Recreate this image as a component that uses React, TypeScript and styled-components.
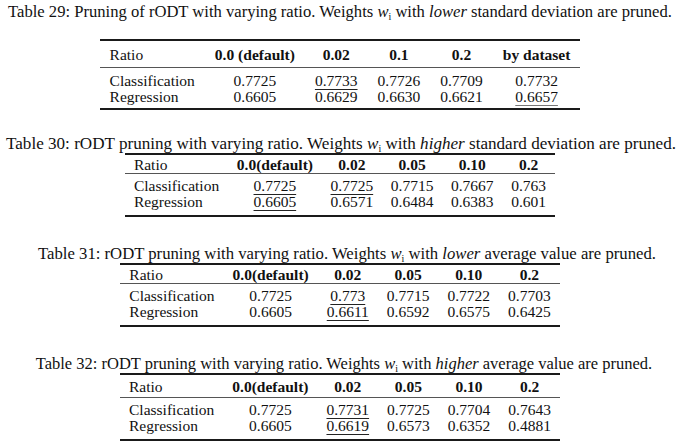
import styled, { createGlobalStyle } from 'styled-components'

const GlobalStyle = createGlobalStyle`
  html, body {
    margin: 0;
    padding: 0;
    background: #fff;
  }
  body {
    font-family: "Liberation Serif", "Times New Roman", serif;
    color: #111;
  }
  table, th, td {
    font-family: "Liberation Serif", "Times New Roman", serif;
  }
`

type Cell = { v: string; u?: boolean; faint?: boolean }

type TableData = {
  caption: React.ReactNode
  capSize: number
  capShift: number
  head: string[]
  rows: { label: string; cells: Cell[] }[]
  capGap: number
  headPad: number
  topSpace: number
  padX: number
}

const Weight = () => (
  <MathVar>
    <i>w</i>
    <sub>i</sub>
  </MathVar>
)

const tables: TableData[] = [
  {
    caption: (
      <>
        Table 29: Pruning of rODT with varying ratio. Weights <Weight /> with <i>lower</i> standard deviation are
        pruned.
      </>
    ),
    capSize: 16.6,
    capShift: 0,
    head: ['0.0 (default)', '0.02', '0.1', '0.2', 'by dataset'],
    rows: [
      { label: 'Classification', cells: [{ v: '0.7725' }, { v: '0.7733', u: true }, { v: '0.7726' }, { v: '0.7709' }, { v: '0.7732' }] },
      { label: 'Regression', cells: [{ v: '0.6605' }, { v: '0.6629' }, { v: '0.6630' }, { v: '0.6621' }, { v: '0.6657', u: true, faint: true }] },
    ],
    capGap: 18,
    headPad: 4.5,
    topSpace: 3,
    padX: 10,
  },
  {
    caption: (
      <>
        Table 30: rODT pruning with varying ratio. Weights <Weight /> with <i>higher</i> standard deviation are pruned.
      </>
    ),
    capSize: 17.1,
    capShift: 1,
    head: ['0.0(default)', '0.02', '0.05', '0.10', '0.2'],
    rows: [
      { label: 'Classification', cells: [{ v: '0.7725', u: true }, { v: '0.7725', u: true }, { v: '0.7715' }, { v: '0.7667' }, { v: '0.763' }] },
      { label: 'Regression', cells: [{ v: '0.6605', u: true }, { v: '0.6571' }, { v: '0.6484' }, { v: '0.6383' }, { v: '0.601' }] },
    ],
    capGap: 0,
    headPad: 0.5,
    topSpace: 25,
    padX: 8.8,
  },
  {
    caption: (
      <>
        Table 31: rODT pruning with varying ratio. Weights <Weight /> with <i>lower</i> average value are pruned.
      </>
    ),
    capSize: 16.7,
    capShift: 7,
    head: ['0.0(default)', '0.02', '0.05', '0.10', '0.2'],
    rows: [
      { label: 'Classification', cells: [{ v: '0.7725' }, { v: '0.773', u: true }, { v: '0.7715' }, { v: '0.7722' }, { v: '0.7703' }] },
      { label: 'Regression', cells: [{ v: '0.6605' }, { v: '0.6611', u: true }, { v: '0.6592' }, { v: '0.6575' }, { v: '0.6425' }] },
    ],
    capGap: 0,
    headPad: 0.5,
    topSpace: 28,
    padX: 9,
  },
  {
    caption: (
      <>
        Table 32: rODT pruning with varying ratio. Weights <Weight /> with <i>higher</i> average value are pruned.
      </>
    ),
    capSize: 16.5,
    capShift: 4,
    head: ['0.0(default)', '0.02', '0.05', '0.10', '0.2'],
    rows: [
      { label: 'Classification', cells: [{ v: '0.7725' }, { v: '0.7731', u: true }, { v: '0.7725' }, { v: '0.7704' }, { v: '0.7643' }] },
      { label: 'Regression', cells: [{ v: '0.6605' }, { v: '0.6619', u: true }, { v: '0.6573' }, { v: '0.6352' }, { v: '0.4881' }] },
    ],
    capGap: 0,
    headPad: 2.5,
    topSpace: 28,
    padX: 9,
  },
]

export default function App() {
  return (
    <>
      <GlobalStyle />
      <Page>
        {tables.map((t, i) => (
          <Block key={i} $top={t.topSpace}>
            <Caption $gap={t.capGap} $size={t.capSize} $shift={t.capShift}>
              {t.caption}
            </Caption>
            <Table $padX={t.padX}>
              <thead>
                <tr>
                  <HeadCell $pad={t.headPad} $plain>
                    Ratio
                  </HeadCell>
                  {t.head.map((h) => (
                    <HeadCell key={h} $pad={t.headPad}>
                      {h}
                    </HeadCell>
                  ))}
                </tr>
              </thead>
              <tbody>
                {t.rows.map((r, ri) => (
                  <Row key={r.label} $first={ri === 0} $last={ri === t.rows.length - 1} $lead={i === 0 ? 5 : 4} $tail={i === 0 ? 3 : 5}>
                    <LabelCell>{r.label}</LabelCell>
                    {r.cells.map((c, ci) => (
                      <ValueCell key={ci}>{c.u ? <Under $faint={c.faint}>{c.v}</Under> : c.v}</ValueCell>
                    ))}
                  </Row>
                ))}
              </tbody>
            </Table>
          </Block>
        ))}
      </Page>
    </>
  )
}

const Page = styled.div`
  width: 680px;
  height: 446px;
  display: flex;
  flex-direction: column;
  overflow: hidden;
`

const Block = styled.section<{ $top: number }>`
  display: flex;
  flex-direction: column;
  align-items: center;
  margin-top: ${(p) => p.$top}px;
`

const Caption = styled.p<{ $gap: number; $size: number; $shift: number }>`
  margin: 0 0 ${(p) => p.$gap}px ${(p) => p.$shift * 2}px;
  font-size: ${(p) => p.$size}px;
  line-height: 18px;
  white-space: nowrap;
  text-align: center;
`

const MathVar = styled.span`
  font-style: normal;
  i {
    font-style: italic;
  }
  sub {
    font-size: 10px;
    vertical-align: -3px;
    line-height: 0;
  }
`

const Table = styled.table<{ $padX: number }>`
  border-collapse: collapse;
  border-top: 2px solid #1a1a1a;
  border-bottom: 2px solid #1a1a1a;
  font-size: 15.5px;
  line-height: 16px;
  color: #111;
  thead {
    border-bottom: 1px solid #555;
  }
  th,
  td {
    padding-left: ${(p) => p.$padX}px;
    padding-right: ${(p) => p.$padX}px;
  }
`

const HeadCell = styled.th<{ $pad: number; $plain?: boolean }>`
  padding-top: ${(p) => p.$pad}px;
  padding-bottom: ${(p) => p.$pad}px;
  line-height: 17px;
  font-weight: ${(p) => (p.$plain ? 400 : 700)};
  text-align: ${(p) => (p.$plain ? 'left' : 'center')};
  white-space: nowrap;
`

const Row = styled.tr<{ $first: boolean; $last: boolean; $lead: number; $tail: number }>`
  td {
    padding-top: ${(p) => (p.$first ? p.$lead : 0)}px;
    padding-bottom: ${(p) => (p.$last ? p.$tail : 0)}px;
  }
`

const LabelCell = styled.td`
  text-align: left;
  white-space: nowrap;
`

const ValueCell = styled.td`
  text-align: center;
  white-space: nowrap;
`

const Under = styled.span<{ $faint?: boolean }>`
  text-decoration: underline;
  text-decoration-thickness: 1px;
  text-underline-offset: 3px;
  text-decoration-color: ${(p) => (p.$faint ? '#777' : '#222')};
`
